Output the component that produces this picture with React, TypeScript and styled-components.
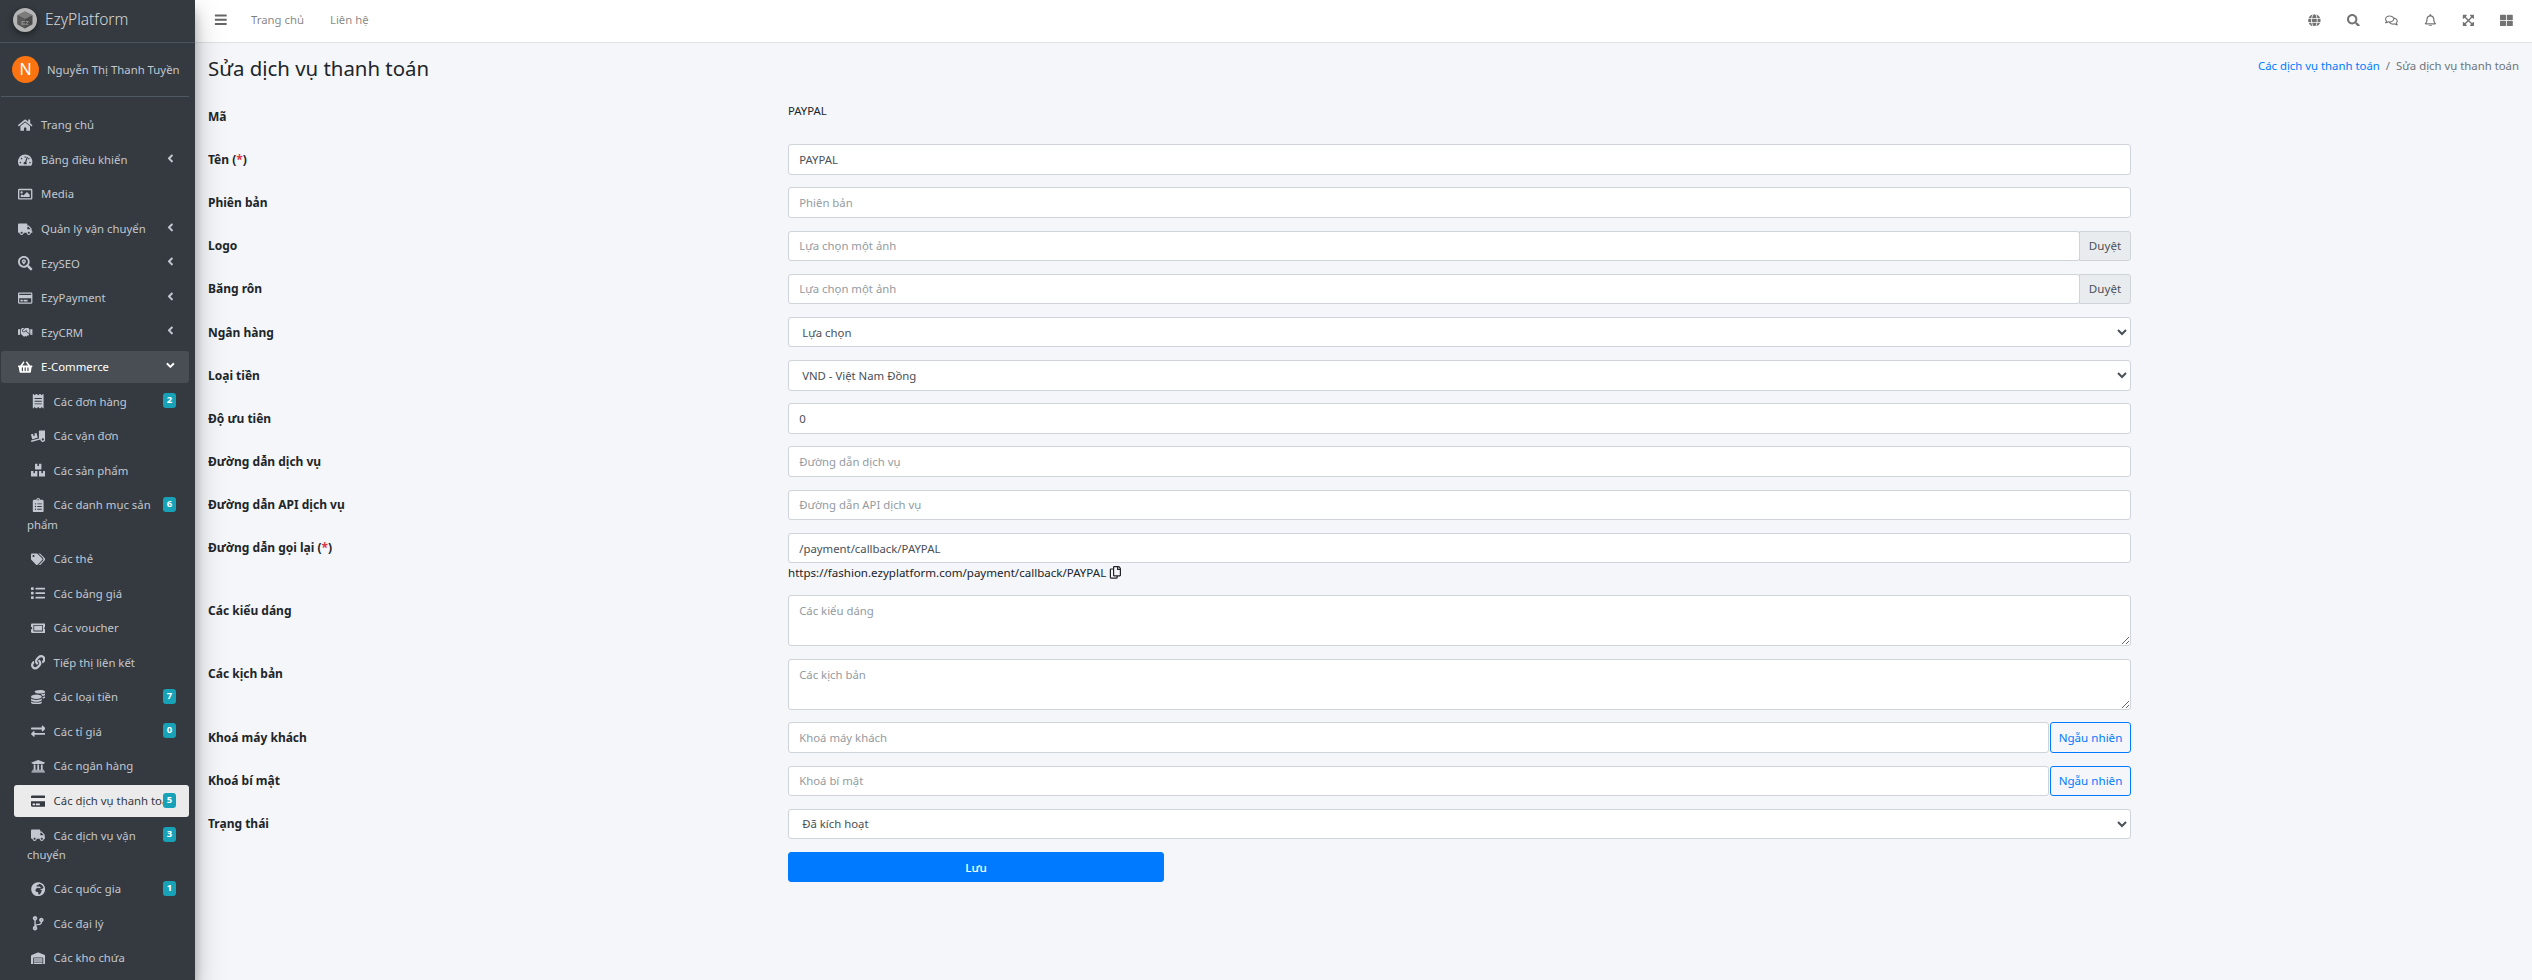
import React from "react";
import styled, { createGlobalStyle } from "styled-components";
import {
  FaHome, FaTachometerAlt, FaRegImage, FaTruck, FaSearchLocation, FaRegCreditCard, FaHandshake,
  FaShoppingBasket, FaReceipt, FaTruckLoading, FaBoxes, FaClipboardList, FaTags, FaList, FaTicketAlt,
  FaLink, FaCoins, FaExchangeAlt, FaUniversity, FaCreditCard, FaGlobeAfrica, FaCodeBranch, FaWarehouse,
  FaAngleLeft, FaAngleDown, FaBars, FaGlobe, FaSearch, FaRegComments, FaRegBell, FaExpandArrowsAlt,
  FaThLarge, FaRegCopy,
} from "react-icons/fa";

const FONT = `"Noto Sans", "Noto Sans CJK SC", sans-serif`;

const Global = createGlobalStyle`
  html, body { margin: 0; padding: 0; height: 980px; overflow: hidden; background: #f4f6f9; }
  body { font-family: ${FONT}; font-size: 11.35px; line-height: 19.2px; color: #212529; }
  * { box-sizing: border-box; }
  svg { height: 1em; width: auto; }
`;

const Layout = styled.div`display: flex; width: 2532px; height: 980px;`;

const Sidebar = styled.aside`
  width: 195px; flex: none; height: 980px; background: #343a40; color: #c2c7d0; position: relative; z-index: 2;
  box-shadow: 0 14px 28px rgba(0,0,0,.25), 0 10px 10px rgba(0,0,0,.22);
  display: flex; flex-direction: column;
`;
const Brand = styled.div`
  height: 43px; flex: none; display: flex; align-items: center; padding: 0 0 3px 13px; gap: 8px;
  border-bottom: 1px solid #4b545c; font-size: 15.5px; font-weight: 300; color: rgba(255,255,255,.8);
`;
const LogoMark = styled.svg`
  width: 24px; height: 24px; filter: drop-shadow(0 2px 3px rgba(0,0,0,.5));
`;
const UserPanel = styled.div`
  height: 54px; flex: none; margin: 0 6px 0 1px; display: flex; align-items: center; padding-left: 11px; gap: 8px;
  border-bottom: 1px solid #4f5962; white-space: nowrap;
`;
const Avatar = styled.div`
  width: 27px; height: 27px; border-radius: 50%; background: #fb7411; color: #fff; font-size: 16px;
  display: flex; align-items: center; justify-content: center;
`;
const Nav = styled.nav`height: 855px; margin-top: 12px; overflow: hidden; flex: none;`;
const Item = styled.div<{ $sub?: boolean; $open?: boolean; $active?: boolean }>`
  position: relative; margin: 0 6px 2.55px ${(p) => (p.$sub ? "14px" : "1px")};
  padding: 6.4px 4px 6.4px ${(p) => (p.$sub ? "13px" : "13.5px")};
  border-radius: 3px; white-space: nowrap; min-height: 32px;
  background: ${(p) => (p.$active ? "rgba(255,255,255,.9)" : p.$open ? "rgba(255,255,255,.1)" : "transparent")};
  color: ${(p) => (p.$active ? "#343a40" : p.$open ? "#fff" : "#c2c7d0")};
`;
const NavIcon = styled.span`
  display: inline-block; width: 20.5px; margin: 0 5.5px 0 .6px; text-align: center; font-size: 14.4px; line-height: 19.2px; vertical-align: top;
  svg { vertical-align: -2px; }
`;
const Arrow = styled.span`
  position: absolute; right: 12.5px; top: 8px; font-size: 12.8px; line-height: 12.8px;
`;
const Badge = styled.span`
  position: absolute; right: 13px; top: 8px; min-width: 13px; height: 15px; background: #17a2b8; color: #fff;
  border-radius: 3px; font-size: 9.5px; font-weight: 700; line-height: 14px; text-align: center;
`;

const Main = styled.main`flex: 1; min-width: 0; display: flex; flex-direction: column;`;
const Header = styled.header`
  height: 43px; flex: none; background: #fff; border-bottom: 1px solid #dee2e6; display: flex; align-items: center;
  color: rgba(0,0,0,.5); padding: 0 6px 2px 19px;
`;
const Burger = styled.span`font-size: 13.6px; display: flex; width: 37px; color: rgba(0,0,0,.6);`;
const HeadLink = styled.span`margin-right: 26px; color: rgba(0,0,0,.5);`;
const HeadIcons = styled.div`margin-left: auto; display: flex; align-items: center; color: rgba(0,0,0,.55);`;
const HeadIcon = styled.span`width: 38.4px; display: flex; justify-content: center; font-size: 12.8px;`;

const Content = styled.div`padding: 12px 13px 0 13px;`;
const TitleRow = styled.div`display: flex; justify-content: space-between; align-items: flex-start; margin-bottom: 18.4px;`;
const Title = styled.h1`margin: 0; font-size: 20.4px; line-height: 27.6px; font-weight: 400;`;
const Crumbs = styled.div`display: flex; gap: 6px; line-height: 22px; color: #6c757d;`;
const CrumbLink = styled.span`color: #007bff;`;

const Row = styled.div`
  display: grid; grid-template-columns: 580px 1343px; margin-bottom: 12.8px; min-height: 30.4px;
`;
const Label = styled.label`font-size: 12px; font-weight: 700; padding-top: 5.6px; line-height: 19.2px;`;
const Req = styled.span`color: #dc3545;`;
const Value = styled.div`color: #212529; line-height: 19.2px;`;
const Group = styled.div`display: flex;`;
const Field = styled.input`
  width: 100%; flex: 1; min-width: 0; height: 30.4px; padding: 0 10.2px; border: 1px solid #ced4da; border-radius: 3px; background: #fff;
  font: 11.35px ${FONT}; color: #495057; outline: none;
  &::placeholder { color: #939ba2; opacity: 1; }
`;
const Select = styled.select`
  width: 100%; height: 30.4px; padding: 0 9.2px; border: 1px solid #ced4da; border-radius: 3px; background: #fff;
  font: 11.35px ${FONT}; color: #495057; outline: none;
`;
const Area = styled.textarea`
  display: block; width: 100%; height: 50.8px; padding: 4.8px 10.2px; border: 1px solid #ced4da; border-radius: 3px; background: #fff;
  font: 11.35px/19.2px ${FONT}; color: #495057; outline: none; resize: vertical;
  &::placeholder { color: #939ba2; opacity: 1; }
`;
const Browse = styled.span`
  flex: none; width: 52px; margin-left: -1px; height: 30.4px; display: flex; align-items: center; justify-content: center;
  background: #e9ecef; border: 1px solid #ced4da; border-radius: 0 3px 3px 0; color: #495057; font-size: 11.6px;
`;
const Random = styled.button`
  flex: none; width: 81px; margin-left: 1px; height: 30.4px; background: transparent; border: 1px solid #007bff; border-radius: 3px;
  color: #007bff; font: 11.6px ${FONT}; padding: 0;
`;
const Hint = styled.div`display: flex; align-items: center; gap: 3px; height: 19.2px; color: #212529; font-size: 11.55px; svg { font-size: 12.8px; }`;
const Save = styled.button`
  display: block; width: 376px; height: 30.4px; background: #007bff; border: 1px solid #007bff; border-radius: 3px;
  color: #fff; font: 500 11.6px ${FONT}; padding: 0;
`;

type NavDef = { icon: React.ReactNode; text: React.ReactNode; arrow?: boolean; badge?: string; sub?: boolean; open?: boolean; active?: boolean };
const items: NavDef[] = [
  { icon: <FaHome />, text: "Trang chủ" },
  { icon: <FaTachometerAlt />, text: "Bảng điều khiển", arrow: true },
  { icon: <FaRegImage />, text: "Media" },
  { icon: <FaTruck />, text: "Quản lý vận chuyển", arrow: true },
  { icon: <FaSearchLocation />, text: "EzySEO", arrow: true },
  { icon: <FaRegCreditCard />, text: "EzyPayment", arrow: true },
  { icon: <FaHandshake />, text: "EzyCRM", arrow: true },
  { icon: <FaShoppingBasket />, text: "E-Commerce", open: true },
  { icon: <FaReceipt />, text: "Các đơn hàng", badge: "2", sub: true },
  { icon: <FaTruckLoading />, text: "Các vận đơn", sub: true },
  { icon: <FaBoxes />, text: "Các sản phẩm", sub: true },
  { icon: <FaClipboardList />, text: <>Các danh mục sản<br />phẩm</>, badge: "6", sub: true },
  { icon: <FaTags />, text: "Các thẻ", sub: true },
  { icon: <FaList />, text: "Các bảng giá", sub: true },
  { icon: <FaTicketAlt />, text: "Các voucher", sub: true },
  { icon: <FaLink />, text: "Tiếp thị liên kết", sub: true },
  { icon: <FaCoins />, text: "Các loại tiền", badge: "7", sub: true },
  { icon: <FaExchangeAlt />, text: "Các tỉ giá", badge: "0", sub: true },
  { icon: <FaUniversity />, text: "Các ngân hàng", sub: true },
  { icon: <FaCreditCard />, text: "Các dịch vụ thanh toán", badge: "5", sub: true, active: true },
  { icon: <FaTruck />, text: <>Các dịch vụ vận<br />chuyển</>, badge: "3", sub: true },
  { icon: <FaGlobeAfrica />, text: "Các quốc gia", badge: "1", sub: true },
  { icon: <FaCodeBranch />, text: "Các đại lý", sub: true },
  { icon: <FaWarehouse />, text: "Các kho chứa", sub: true },
];

const Logo = () => (
  <LogoMark viewBox="0 0 24 24">
    <circle cx="12" cy="12" r="12" fill="#b5b5b5" />
    <path d="M12 3.5l7.5 3.8v9L12 20.5l-7.5-4.2v-9z" fill="#4c4c4c" />
    <path d="M12 3.5l7.5 3.8-7.5 3.8-7.5-3.8z" fill="#7d7d7d" />
    <path d="M12 11.1v9.4l-7.5-4.2v-9z" fill="#5a5a5a" />
    <text x="12" y="16.5" textAnchor="middle" fontSize="6" fontWeight="700" fill="#9a9a9a" fontFamily="Liberation Sans, sans-serif">EZ</text>
  </LogoMark>
);

export default function App() {
  return (
    <Layout>
      <Global />
      <Sidebar>
        <Brand><Logo /><span>EzyPlatform</span></Brand>
        <UserPanel><Avatar>N</Avatar><span>Nguyễn Thị Thanh Tuyền</span></UserPanel>
        <Nav>
          {items.map((it, i) => (
            <Item key={i} $sub={it.sub} $open={it.open} $active={it.active}>
              <NavIcon>{it.icon}</NavIcon>{it.text}
              {it.arrow && <Arrow><FaAngleLeft /></Arrow>}
              {it.open && <Arrow><FaAngleDown /></Arrow>}
              {it.badge && <Badge>{it.badge}</Badge>}
            </Item>
          ))}
        </Nav>
      </Sidebar>
      <Main>
        <Header>
          <Burger><FaBars /></Burger>
          <HeadLink>Trang chủ</HeadLink>
          <HeadLink>Liên hệ</HeadLink>
          <HeadIcons>
            <HeadIcon><FaGlobe /></HeadIcon>
            <HeadIcon><FaSearch /></HeadIcon>
            <HeadIcon><FaRegComments /></HeadIcon>
            <HeadIcon><FaRegBell /></HeadIcon>
            <HeadIcon><FaExpandArrowsAlt /></HeadIcon>
            <HeadIcon><FaThLarge /></HeadIcon>
          </HeadIcons>
        </Header>
        <Content>
          <TitleRow>
            <Title>Sửa dịch vụ thanh toán</Title>
            <Crumbs><CrumbLink>Các dịch vụ thanh toán</CrumbLink><span>/</span><span>Sửa dịch vụ thanh toán</span></Crumbs>
          </TitleRow>
          <form>
            <Row><Label>Mã</Label><Value>PAYPAL</Value></Row>
            <Row><Label>Tên (<Req>*</Req>)</Label><Field defaultValue="PAYPAL" /></Row>
            <Row><Label>Phiên bản</Label><Field placeholder="Phiên bản" /></Row>
            <Row><Label>Logo</Label><Group><Field placeholder="Lựa chọn một ảnh" /><Browse>Duyệt</Browse></Group></Row>
            <Row><Label>Băng rôn</Label><Group><Field placeholder="Lựa chọn một ảnh" /><Browse>Duyệt</Browse></Group></Row>
            <Row><Label>Ngân hàng</Label><Select><option>Lựa chọn</option></Select></Row>
            <Row><Label>Loại tiền</Label><Select><option>VND - Việt Nam Đồng</option></Select></Row>
            <Row><Label>Độ ưu tiên</Label><Field defaultValue="0" /></Row>
            <Row><Label>Đường dẫn dịch vụ</Label><Field placeholder="Đường dẫn dịch vụ" /></Row>
            <Row><Label>Đường dẫn API dịch vụ</Label><Field placeholder="Đường dẫn API dịch vụ" /></Row>
            <Row>
              <Label>Đường dẫn gọi lại (<Req>*</Req>)</Label>
              <div>
                <Field defaultValue="/payment/callback/PAYPAL" />
                <Hint>https://fashion.ezyplatform.com/payment/callback/PAYPAL <FaRegCopy /></Hint>
              </div>
            </Row>
            <Row><Label>Các kiểu dáng</Label><Area placeholder="Các kiểu dáng" /></Row>
            <Row><Label>Các kịch bản</Label><Area placeholder="Các kịch bản" /></Row>
            <Row><Label>Khoá máy khách</Label><Group><Field placeholder="Khoá máy khách" /><Random type="button">Ngẫu nhiên</Random></Group></Row>
            <Row><Label>Khoá bí mật</Label><Group><Field placeholder="Khoá bí mật" /><Random type="button">Ngẫu nhiên</Random></Group></Row>
            <Row><Label>Trạng thái</Label><Select><option>Đã kích hoạt</option></Select></Row>
            <Row><span /><Save type="button">Lưu</Save></Row>
          </form>
        </Content>
      </Main>
    </Layout>
  );
}
